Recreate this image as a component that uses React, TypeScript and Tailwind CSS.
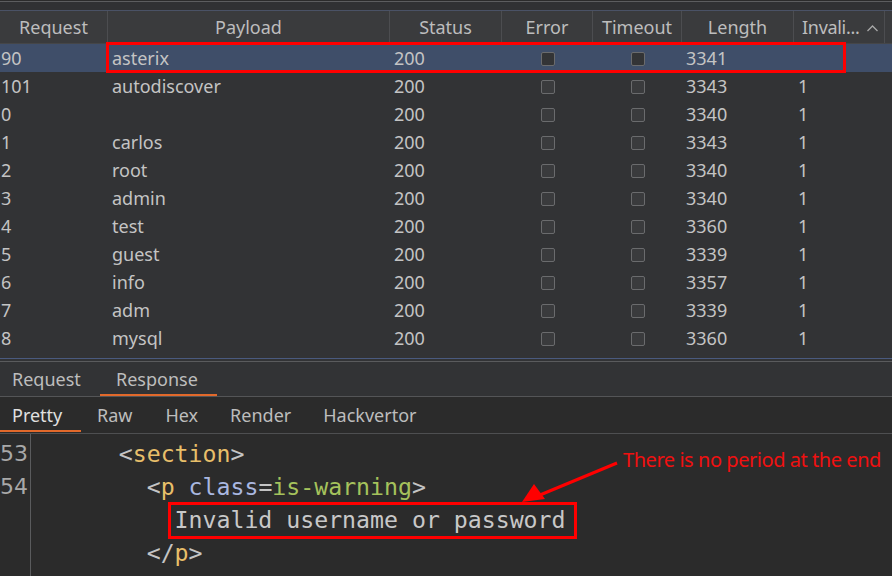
import React from 'react';

type Row = { req: string; payload: string; status: string; length: string; invalid: string; selected?: boolean };

const rows: Row[] = [
  { req: '90', payload: 'asterix', status: '200', length: '3341', invalid: '', selected: true },
  { req: '101', payload: 'autodiscover', status: '200', length: '3343', invalid: '1' },
  { req: '0', payload: '', status: '200', length: '3340', invalid: '1' },
  { req: '1', payload: 'carlos', status: '200', length: '3343', invalid: '1' },
  { req: '2', payload: 'root', status: '200', length: '3340', invalid: '1' },
  { req: '3', payload: 'admin', status: '200', length: '3340', invalid: '1' },
  { req: '4', payload: 'test', status: '200', length: '3360', invalid: '1' },
  { req: '5', payload: 'guest', status: '200', length: '3339', invalid: '1' },
  { req: '6', payload: 'info', status: '200', length: '3357', invalid: '1' },
  { req: '7', payload: 'adm', status: '200', length: '3339', invalid: '1' },
  { req: '8', payload: 'mysql', status: '200', length: '3360', invalid: '1' },
];

const cols = 'grid grid-cols-[108px_282px_112px_91px_89px_112px_91px_7px]';

const Check = ({ dark }: { dark?: boolean }) => (
  <div className={`w-[14px] h-[14px] rounded-[2px] border border-[#6a6b6d] ${dark ? 'bg-[#333436]' : 'bg-[#3a3b3d]'}`} />
);

const HeadCell = ({ children, last }: { children?: React.ReactNode; last?: boolean }) => (
  <div className={`flex items-center justify-center overflow-hidden ${last ? '' : 'border-r border-[#4c4d50]'}`}>{children}</div>
);

const App: React.FC = () => {
  return (
    <div className="w-[892px] h-[576px] overflow-hidden bg-[#2b2b2b] text-[#c4c4c4] relative flex flex-col" style={{ fontFamily: '"Noto Sans", sans-serif' }}>
      {/* Results table */}
      <div className="bg-[#323335] flex flex-col">
        <div className="h-px bg-[#2b2b2b]" />
        <div className="h-px bg-[#5c5d5f]" />
        <div className="h-[8px] bg-[#303133]" />
        <div className="h-px bg-[#4a5266]" />
        <div className={`${cols} h-[33px] bg-[#3a3b3d] border-b border-[#454648] text-[18px] text-[#bdbdbd]`}>
          <HeadCell>Request</HeadCell>
          <HeadCell>Payload</HeadCell>
          <HeadCell>Status</HeadCell>
          <HeadCell>Error</HeadCell>
          <HeadCell>Timeout</HeadCell>
          <HeadCell>Length</HeadCell>
          <HeadCell>
            <div className="flex items-center w-full pl-[8px] pr-[5px]">
              <span className="w-[61px] overflow-hidden whitespace-nowrap tracking-[-0.3px]">Invali...</span>
              <svg width="13" height="8" viewBox="0 0 13 8" className="ml-[3px] mt-[2px] shrink-0">
                <path d="M1.5 7 L6.5 2 L11.5 7" fill="none" stroke="#a8a8a8" strokeWidth="1.3" />
              </svg>
            </div>
          </HeadCell>
          <HeadCell last />
        </div>
        {rows.map((r, i) => (
          <div key={i} className={`${cols} h-[28px] items-center text-[18px] pt-[1px] ${r.selected ? 'bg-[#3f4e69]' : ''}`}>
            <div className="pl-[1px]">{r.req}</div>
            <div className="pl-[4px]">{r.payload}</div>
            <div className="pl-[4px]">{r.status}</div>
            <div className="flex justify-center"><Check dark={r.selected} /></div>
            <div className="flex justify-center"><Check dark={r.selected} /></div>
            <div className="pl-[4px]">{r.length}</div>
            <div className="pl-[4px]">{r.invalid}</div>
            <div />
          </div>
        ))}
        <div className="h-[6px]" />
        <div className="h-px bg-[#4a5a7e]" />
        <div className="h-[2px]" />
        <div className="h-px bg-[#5a5b5d]" />
        {/* Request / Response tabs */}
        <div className="h-[34px] flex items-stretch text-[18px] text-[#bdbdbd]">
          <div className="w-[100px] pl-[12px] flex items-center">Request</div>
          <div className="relative flex items-center pl-[16px] w-[117px]">
            Response
            <div className="absolute left-0 right-0 bottom-0 h-[2px] bg-[#e2692b]" />
          </div>
        </div>
        <div className="h-px bg-[#545557]" />
      </div>
      {/* Pretty / Raw tabs */}
      <div className="h-[36px] flex items-stretch text-[18px] text-[#bdbdbd] bg-[#2b2b2b]">
        <div className="relative flex items-center pl-[12px] w-[81px] text-[#e0e0e0]">
          Pretty
          <div className="absolute left-0 right-0 bottom-[1px] h-[2px] bg-[#e2692b]" />
        </div>
        <div className="flex items-center">
          <span className="ml-[16px]">Raw</span>
          <span className="ml-[33px]">Hex</span>
          <span className="ml-[32px]">Render</span>
          <span className="ml-[32px]">Hackvertor</span>
        </div>
      </div>
      <div className="h-px bg-[#4e4f51]" />
      {/* Code view */}
      <div className="flex-1 flex text-[23.2px] leading-[33px]" style={{ fontFamily: '"DejaVu Sans Mono", monospace' }}>
        <div className="w-[31px] border-r border-[#5a5b5d] pt-[3px] text-right text-[#a8a8a8] pr-[4px]" style={{ fontFamily: '"DejaVu Sans", sans-serif' }}>
          <div className="-mr-[1px] text-[22px]">53</div>
          <div className="-mr-[1px] text-[22px]">54</div>
        </div>
        <div className="pl-[4px] pt-[3px] whitespace-pre">
          <div>
            <span className="text-[#c4c4c4]">      &lt;</span>
            <span className="text-[#e8bf6a]">section</span>
            <span className="text-[#c4c4c4]">&gt;</span>
          </div>
          <div>
            <span className="text-[#c4c4c4]">        &lt;</span>
            <span className="text-[#e8bf6a]">p</span>
            <span> </span>
            <span className="text-[#a9b7e0]">class</span>
            <span className="text-[#c4c4c4]">=</span>
            <span className="text-[#a5c25c]">is-warning</span>
            <span className="text-[#c4c4c4]">&gt;</span>
          </div>
          <div className="text-[#c8c8c8]">{'          Invalid username or password'}</div>
          <div>
            <span className="text-[#c4c4c4]">        &lt;/</span>
            <span className="text-[#e8bf6a]">p</span>
            <span className="text-[#c4c4c4]">&gt;</span>
          </div>
        </div>
      </div>

      {/* Annotations */}
      <div className="absolute left-[106px] top-[42px] w-[740px] h-[31px] border-[3px] border-[#ff0000]" />
      <div className="absolute left-[168px] top-[502px] w-[409px] h-[37px] border-[3px] border-[#ff0000]" />
      <div className="absolute left-[623px] top-[446px] text-[20px] tracking-[-0.45px] text-[#f01010] whitespace-nowrap leading-[28px]">
        There is no period at the end
      </div>
      <svg className="absolute left-0 top-0" width="892" height="576">
        <line x1="617" y1="463" x2="540" y2="495" stroke="#ff0000" strokeWidth="3" />
        <polygon points="522,502 534,484 545,499" fill="#ff0000" />
      </svg>
    </div>
  );
};

export default App;
